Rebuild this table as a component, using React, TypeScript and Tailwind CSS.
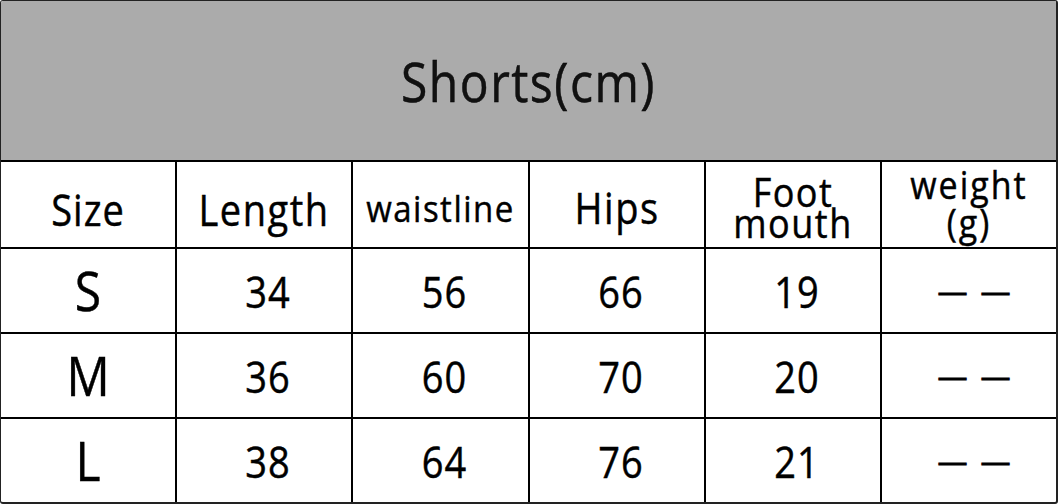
import React from "react";

const rows = [
  ["S", "34", "56", "66", "19"],
  ["M", "36", "60", "70", "20"],
  ["L", "38", "64", "76", "21"],
];

const cell = "flex items-center justify-center border-black text-black";
const t = "inline-block scale-y-[1.13] [-webkit-text-stroke:0.4px_black]";

export default function App() {
  return (
    <div
      className="w-[1058px] h-[504px] bg-white overflow-hidden"
      style={{ fontFamily: '"Open Sans", "Noto Sans", sans-serif' }}
    >
      <div className="w-[1058px] h-[504px] border-t border-l border-r-2 border-b-2 border-[#222] rounded-[3px] flex flex-col overflow-hidden">
        <div className="h-[161px] shrink-0 bg-[#ababab] border-b-2 border-black flex items-center justify-center pt-[2px]">
          <span className={`${t} text-[48px] tracking-[1.5px] leading-none text-[#111]`}>Shorts(cm)</span>
        </div>
        <div className="grid grid-cols-[176px_176px_177px_176px_176px_174px] grid-rows-[87px_85px_85px_84px]">
          <div className={`${cell} border-r-2 border-b-2 pt-[8px]`}>
            <span className={`${t} text-[38px] tracking-[1px] leading-none`}>Size</span>
          </div>
          <div className={`${cell} border-r-2 border-b-2 pt-[8px]`}>
            <span className={`${t} text-[38px] tracking-[1.5px] leading-none`}>Length</span>
          </div>
          <div className={`${cell} border-r-2 border-b-2 pt-[6px]`}>
            <span className={`${t} text-[33px] tracking-[1.5px] leading-none`}>waistline</span>
          </div>
          <div className={`${cell} border-r-2 border-b-2 pt-[4px]`}>
            <span className={`${t} text-[38px] tracking-[1.5px] leading-none`}>Hips</span>
          </div>
          <div className={`${cell} border-r-2 border-b-2 flex-col pt-[4px]`}>
            <span className={`${t} text-[36px] tracking-[1.5px] leading-[31px]`}>Foot</span>
            <span className={`${t} text-[36px] tracking-[1.5px] leading-[31px]`}>mouth</span>
          </div>
          <div className={`${cell} border-b-2 flex-col pb-[4px]`}>
            <span className={`${t} text-[34px] tracking-[2px] leading-[38px]`}>weight</span>
            <span className={`${t} text-[34px] tracking-[2px] leading-[38px]`}>(g)</span>
          </div>
          {rows.map((r, i) => (
            <React.Fragment key={r[0]}>
              <div className={`${cell} border-r-2 ${i < 2 ? "border-b-2" : ""}`}>
                <span className={`${t} text-[48px] leading-none`}>{r[0]}</span>
              </div>
              {r.slice(1).map((v, j) => (
                <div key={j} className={`${cell} border-r-2 ${i < 2 ? "border-b-2" : ""} pl-[8px]`}>
                  <span className={`${t} text-[38px] tracking-[1px] leading-none`}>{v}</span>
                </div>
              ))}
              <div className={`${cell} ${i < 2 ? "border-b-2" : ""} pl-[10px] gap-[13px]`}>
                <span className="text-[30px] leading-none [-webkit-text-stroke:0.8px_black]">—</span>
                <span className="text-[30px] leading-none [-webkit-text-stroke:0.8px_black]">—</span>
              </div>
            </React.Fragment>
          ))}
        </div>
      </div>
    </div>
  );
}
